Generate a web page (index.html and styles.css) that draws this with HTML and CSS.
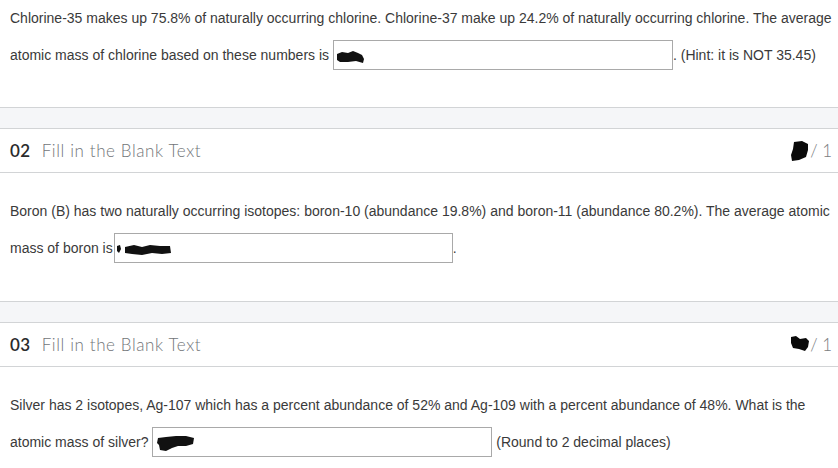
FILE: index.html
```html
<!DOCTYPE html>
<html>
<head>
<meta charset="utf-8">
<link rel="stylesheet" href="styles.css">
</head>
<body>
<div class="page">
  <div class="question question--first">
    <p class="qtext">Chlorine-35 makes up 75.8% of naturally occurring chlorine. Chlorine-37 make up 24.2% of naturally occurring chlorine. The average atomic mass of chlorine based on these numbers is <span class="blank"><svg class="scribble" width="30" height="14" viewBox="0 0 30 14"><path d="M1 4 L6 2 L12 3 L17 1 L22 3 L26 5 L28 9 L27 13 L20 11 L12 12 L4 12 L1 10 Z" fill="#111"/></svg></span>. (Hint: it is NOT 35.45)</p>
  </div>

  <div class="divider"></div>
  <div class="qhead">
    <div class="qtitle"><span class="qnum">02</span><span class="qtype">Fill in the Blank Text</span></div>
    <div class="qpoints"><svg class="pblob" width="20" height="22" viewBox="0 0 20 22"><path d="M4 2 L12 1 L18 4 L18 10 L16 17 L9 20 L2 21 L1 15 L3 9 Z" fill="#0a0a0a"/></svg><span class="pts">/ 1</span></div>
  </div>
  <div class="question">
    <p class="qtext">Boron (B) has two naturally occurring isotopes: boron-10 (abundance 19.8%) and boron-11 (abundance 80.2%). The average atomic mass of boron is<span class="blank blank--narrow"><svg class="scribble" width="56" height="13" viewBox="0 0 56 13"><path d="M1 3 L4 2 L5 6 L3 10 L1 8 Z M9 4 L18 2 L26 4 L34 2 L44 3 L54 3 L55 10 L46 11 L36 10 L26 12 L16 11 L9 10 Z" fill="#111"/></svg></span>.</p>
  </div>

  <div class="divider"></div>
  <div class="qhead">
    <div class="qtitle"><span class="qnum">03</span><span class="qtype">Fill in the Blank Text</span></div>
    <div class="qpoints"><svg class="pblob pblob--two" width="20" height="17" viewBox="0 0 20 17"><path d="M1 2 L6 1 L10 4 L16 3 L19 6 L18 12 L15 16 L9 14 L3 13 L1 8 Z" fill="#0a0a0a"/></svg><span class="pts">/ 1</span></div>
  </div>
  <div class="question">
    <p class="qtext">Silver has 2 isotopes, Ag-107 which has a percent abundance of 52% and Ag-109 with a percent abundance of 48%. What is the atomic mass of silver? <span class="blank blank--silver"><svg class="scribble" width="40" height="17" viewBox="0 0 40 17"><path d="M2 3 L10 2 L20 1 L30 1 L38 3 L37 9 L30 11 L22 11 L16 13 L10 16 L4 15 L3 10 L1 8 Z" fill="#111"/></svg></span> (Round to 2 decimal places)</p>
  </div>
</div>
</body>
</html>
```

FILE: styles.css
```css
html, body {
  margin: 0;
  padding: 0;
  background: #ffffff;
}

.page {
  width: 838px;
  font-family: "Liberation Sans", Arial, sans-serif;
  font-size: 14px;
  color: #3a3a3a;
}

.question {
  padding: 20px 6px 34px 10px;
}

.question--first {
  padding-top: 0;
  padding-bottom: 33px;
}

.qtext {
  margin: 0;
  line-height: 37px;
}

.blank {
  display: inline-block;
  box-sizing: border-box;
  width: 340px;
  height: 30px;
  border: 1px solid #a9a9a9;
  background: #fff;
  vertical-align: middle;
  margin-top: -3px;
  position: relative;
  line-height: normal;
}

.blank--narrow {
  width: 339px;
  margin-left: 1px;
}

.scribble {
  position: absolute;
  left: 2px;
  top: 9px;
}

.blank--narrow .scribble {
  top: 9px;
  left: 1px;
}

.blank--silver .scribble {
  top: 7px;
  left: 3px;
}

.divider {
  height: 20px;
  background: #f5f6f8;
  border-top: 1px solid #d2d4d6;
}

.qhead {
  display: flex;
  align-items: center;
  justify-content: space-between;
  height: 43px;
  padding: 0 6px 0 10px;
  border-top: 1px solid #d2d4d6;
  border-bottom: 1px solid #d2d4d6;
  font-family: Lato, "Open Sans", sans-serif;
  font-size: 17px;
}

.qtitle {
  display: flex;
  align-items: baseline;
  gap: 11px;
}

.qnum {
  font-weight: 600;
  color: #2a2b2c;
  letter-spacing: 0.5px;
}

.qtype {
  font-weight: 300;
  color: #727578;
  letter-spacing: 0.6px;
}

.qpoints {
  display: flex;
  align-items: center;
}

.pblob {
  display: block;
}

.pblob--two {
  margin-top: -2px;
}

.pts {
  font-weight: 300;
  color: #7a7d80;
  font-size: 17px;
}
```
